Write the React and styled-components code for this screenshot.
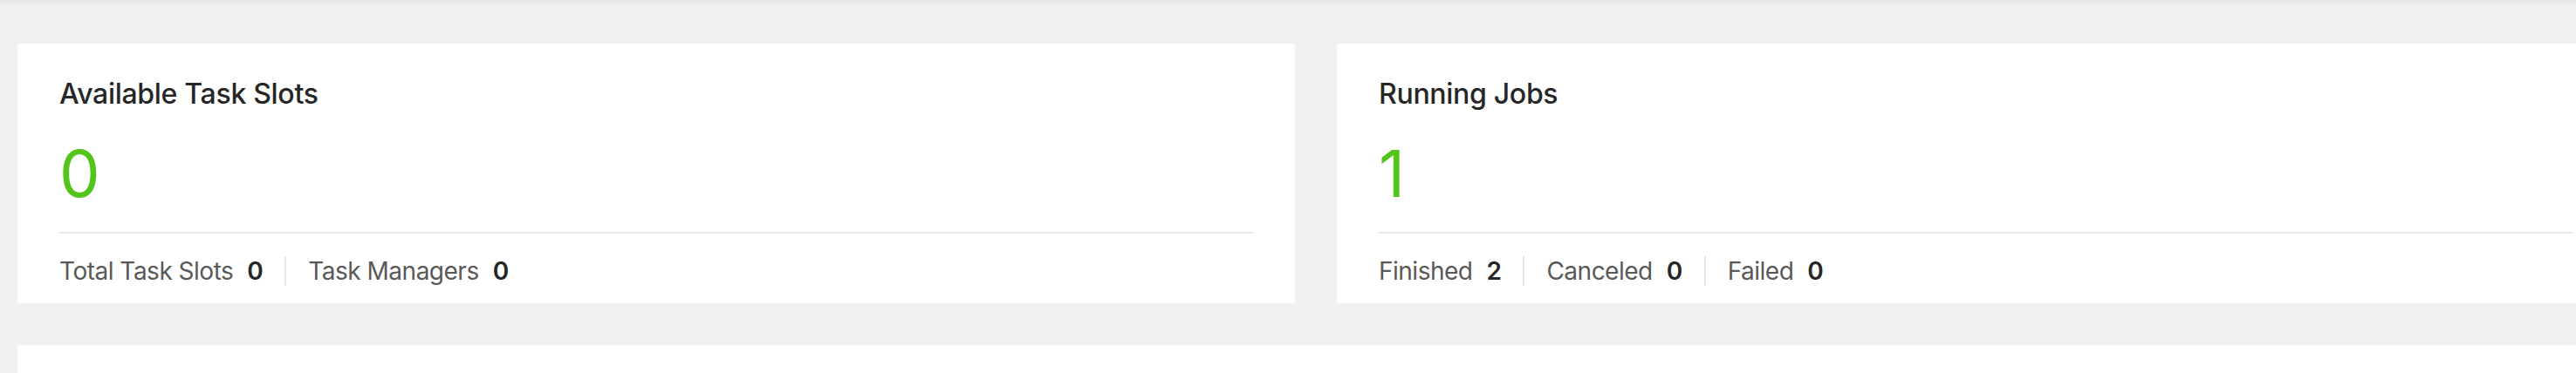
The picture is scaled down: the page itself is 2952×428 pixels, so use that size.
import styled, { createGlobalStyle } from 'styled-components';

const GlobalStyle = createGlobalStyle`
  html, body {
    margin: 0;
    background: #f1f1f1;
    overflow: hidden;
  }
  body {
    font-family: Inter, "Liberation Sans", sans-serif;
  }
`;

// header shadow along the top
const HeaderShade = styled.div`
  height: 10px;
  background: linear-gradient(#e5e7e5, #f1f1f1);
`;

const Page = styled.main`
  width: 3016px;
  padding: 40px 20px 0;
  box-sizing: border-box;
`;

const CardRow = styled.section`
  display: grid;
  grid-template-columns: repeat(2, 1464px);
  gap: 48px;
`;

const Card = styled.div`
  background: #fff;
  border-radius: 4px;
  padding: 34px 48px 0;
  height: 298px;
  box-sizing: border-box;
`;

const Title = styled.div`
  font-size: 32px;
  font-weight: 500;
  line-height: 48px;
  letter-spacing: -0.3px;
  color: #262626;
`;

const Total = styled.div`
  margin-top: 22px;
  font-size: 74px;
  line-height: 90px;
  color: #52c41a;
`;

const Divider = styled.hr`
  margin: 22px 0 0;
  border: 0;
  border-top: 2px solid #e8e8e8;
`;

const Footer = styled.div`
  display: flex;
  align-items: center;
  height: 86px;
  font-size: 28px;
  letter-spacing: -0.5px;
`;

const Item = styled.span`
  display: flex;
  align-items: center;
  gap: 16px;
  color: #595959;
  & + & {
    border-left: 2px solid #e8e8e8;
    margin-left: 25px;
    padding-left: 25px;
  }
`;

const Count = styled.b`
  color: #262626;
  font-weight: 600;
`;

const Panel = styled.div`
  margin-top: 48px;
  background: #fff;
  border-radius: 4px 0 0 0;
  height: 32px;
`;

const stats = [
  {
    title: 'Available Task Slots',
    total: 0,
    items: [
      ['Total Task Slots', 0],
      ['Task Managers', 0],
    ],
  },
  {
    title: 'Running Jobs',
    total: 1,
    items: [
      ['Finished', 2],
      ['Canceled', 0],
      ['Failed', 0],
    ],
  },
];

const App = () => (
  <>
    <GlobalStyle />
    <HeaderShade />
    <Page>
      <CardRow>
        {stats.map((s) => (
          <Card key={s.title}>
            <Title>{s.title}</Title>
            <Total>{s.total}</Total>
            <Divider />
            <Footer>
              {s.items.map(([label, n]) => (
                <Item key={label}>
                  {label}
                  <Count>{n}</Count>
                </Item>
              ))}
            </Footer>
          </Card>
        ))}
      </CardRow>
      <Panel />
    </Page>
  </>
);

export default App;
